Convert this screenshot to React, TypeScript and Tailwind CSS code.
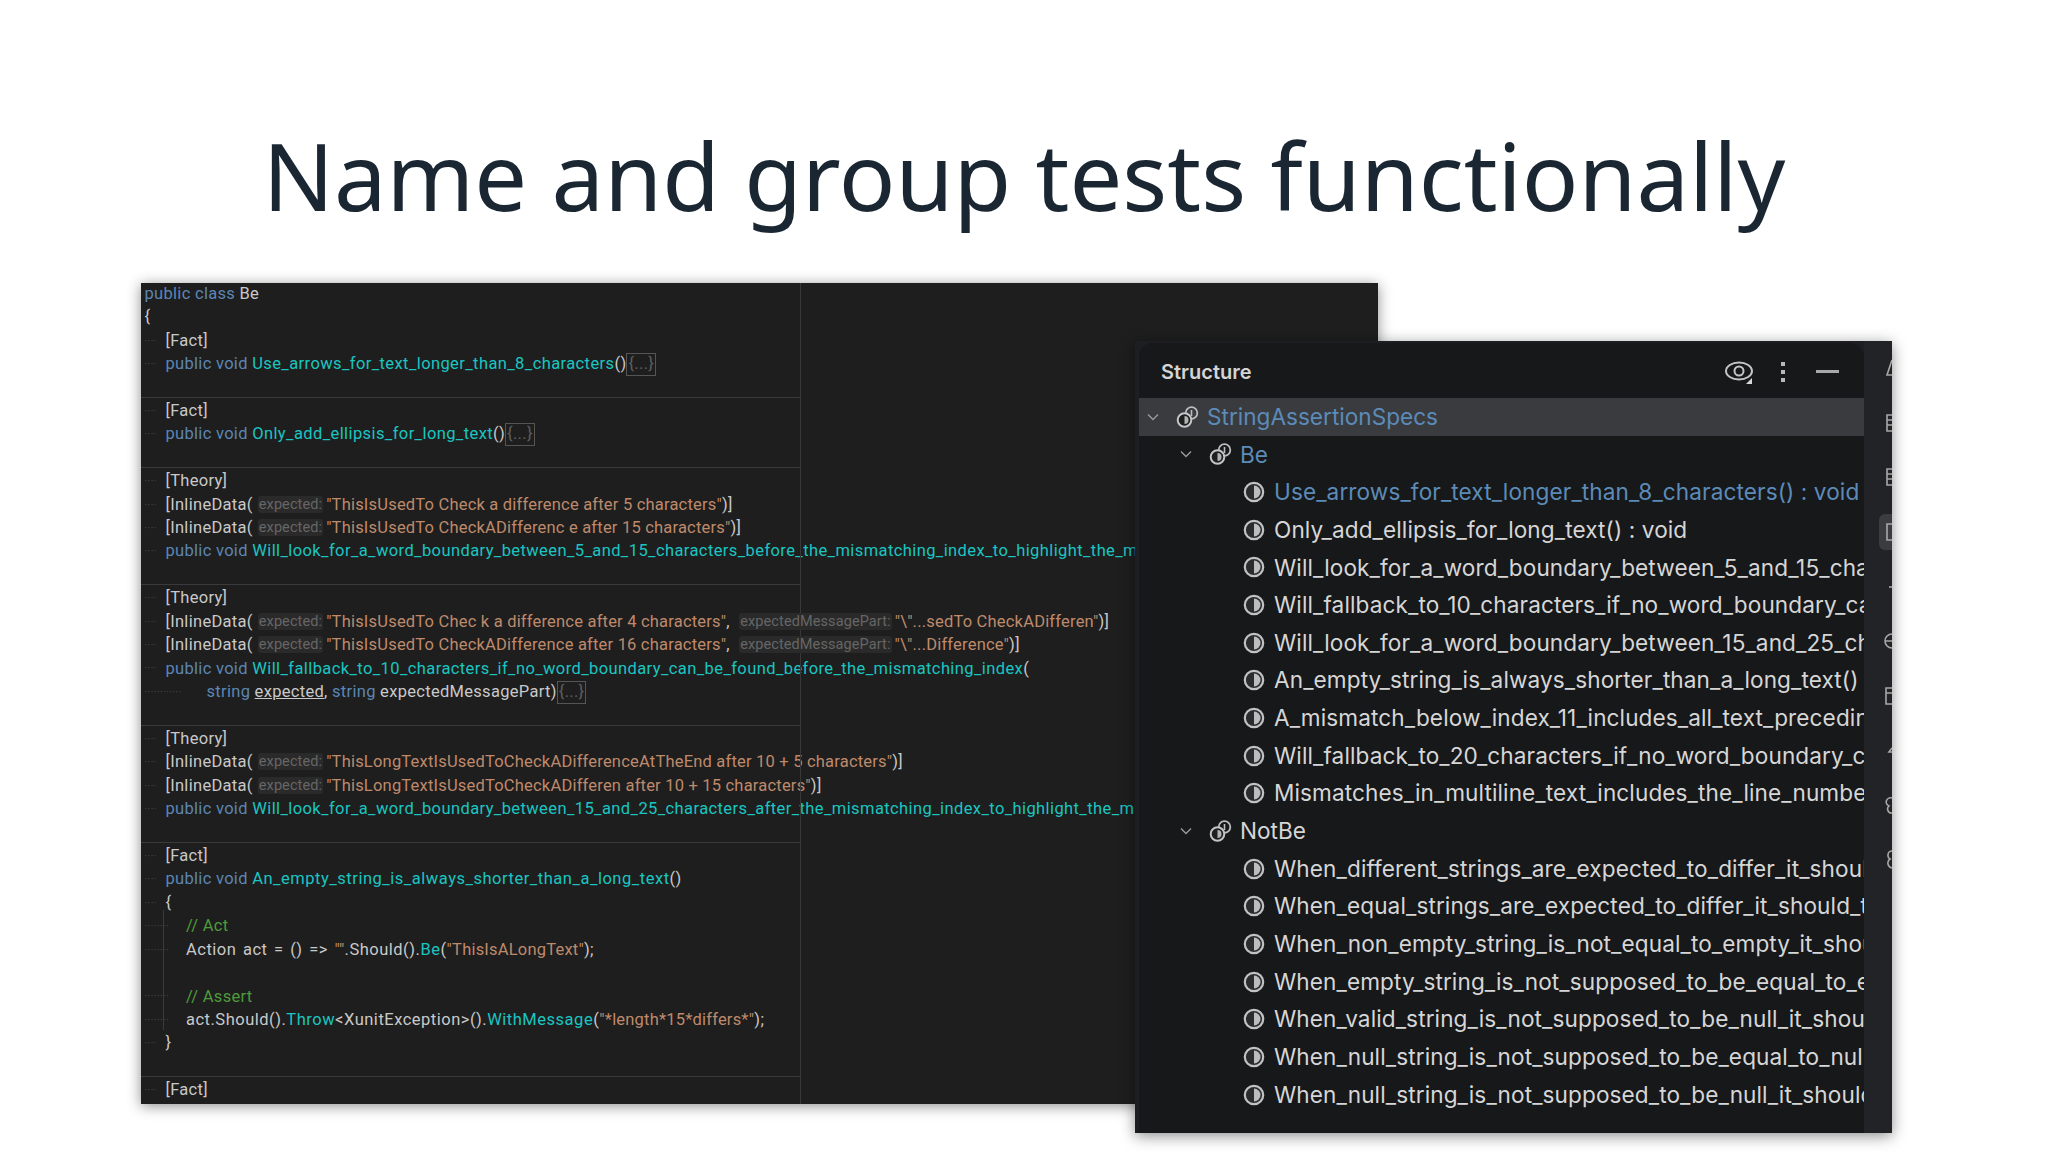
const KW = "text-[#5c86b4]";
const FN = "text-[#1ac5c2] tracking-[0.4px]";
const TX = "text-[#c9c9c9]";
const ST = "text-[#bf8a6c] tracking-[0.2px]";
const CM = "text-[#4f9a3c]";

function K({ children }: { children: React.ReactNode }) { return <span className={KW}>{children}</span>; }
function F({ children, wide }: { children: React.ReactNode; wide?: boolean }) { return <span className={wide ? "text-[#1ac5c2] tracking-[0.52px]" : FN}>{children}</span>; }
function S({ children }: { children: React.ReactNode }) { return <span className={ST}>{children}</span>; }
function Hint({ children }: { children: React.ReactNode }) {
  return <span className="relative -top-[1px] ml-[5px] mr-[3px] rounded-[3px] bg-[#2a2a2a] px-[1px] text-[14.5px] tracking-[0.1px] text-[#666666]">{children}</span>;
}
function Fold() {
  return <span className="inline-block h-[23px] border border-[#555555] px-[1px] leading-[20px] text-[#5f5f5f]">{"{...}"}</span>;
}
function Line({ n = 0, loose, children }: { n?: number; loose?: boolean; children?: React.ReactNode }) {
  const pad = ["w-0", "w-[21px]", "w-[41.5px]", "w-[62px]"][n];
  const dots = ["", "····", "········", "············"][n];
  return (
    <div className="flex h-[23.43px] items-center whitespace-nowrap pl-[3.5px]">
      <span className={`${pad} shrink-0 text-[10px] tracking-[0.5px] text-[#4a4a4a]`}>{dots}</span>
      <span className={loose ? `${TX} tracking-[0.5px] [word-spacing:2px]` : TX}>{children}</span>
    </div>
  );
}
function Sep() {
  return (
    <div className="flex h-[23.43px] items-end pb-[2px]">
      <div className="h-px w-[659px] bg-[#3a3a3a]" />
    </div>
  );
}
function Inline({ children }: { children: React.ReactNode }) {
  return <Line n={1}>[InlineData(<Hint>expected:</Hint>{children}</Line>;
}

function Editor() {
  return (
    <div className="relative ml-[141px] h-[821px] w-[1237px] overflow-hidden bg-[#1e1e1e] font-['Roboto',sans-serif] text-[16.5px] tracking-[0.3px] shadow-[0_2px_13px_rgba(0,0,0,0.45)]">
      <div className="absolute left-[659px] top-0 h-full w-px bg-[#383838]" />
      <div className="absolute left-[21.5px] top-[627px] h-[120px] w-px bg-[#3a3a3a]" />
      <div className="-mt-[0.5px]">
        <Line><K>public class</K> Be</Line>
        <Line>{"{"}</Line>
        <Line n={1}>[Fact]</Line>
        <Line n={1}><K>public void</K> <F>Use_arrows_for_text_longer_than_8_characters</F>()<Fold /></Line>
        <Sep />
        <Line n={1}>[Fact]</Line>
        <Line n={1}><K>public void</K> <F>Only_add_ellipsis_for_long_text</F>()<Fold /></Line>
        <Sep />
        <Line n={1}>[Theory]</Line>
        <Inline><S>"ThisIsUsedTo Check a difference after 5 characters"</S>)]</Inline>
        <Inline><S>"ThisIsUsedTo CheckADifferenc e after 15 characters"</S>)]</Inline>
        <Line n={1}><K>public void</K> <F>Will_look_for_a_word_boundary_between_5_and_15_characters_before_the_mismatching_index_to_highlight_the_mismatch</F></Line>
        <Sep />
        <Line n={1}>[Theory]</Line>
        <Inline><S>"ThisIsUsedTo Chec k a difference after 4 characters"</S>, <Hint>expectedMessagePart:</Hint><S>"\"...sedTo CheckADifferen"</S>)]</Inline>
        <Inline><S>"ThisIsUsedTo CheckADifference after 16 characters"</S>, <Hint>expectedMessagePart:</Hint><S>"\"...Difference"</S>)]</Inline>
        <Line n={1}><K>public void</K> <F>Will_fallback_to_10_characters_if_no_word_boundary_can_be_found_before_the_mismatching_index</F>(</Line>
        <Line n={3}><K>string</K> <span className="underline">expected</span>, <K>string</K> expectedMessagePart)<Fold /></Line>
        <Sep />
        <Line n={1}>[Theory]</Line>
        <Inline><S>"ThisLongTextIsUsedToCheckADifferenceAtTheEnd after 10 + 5 characters"</S>)]</Inline>
        <Inline><S>"ThisLongTextIsUsedToCheckADifferen after 10 + 15 characters"</S>)]</Inline>
        <Line n={1}><K>public void</K> <F>Will_look_for_a_word_boundary_between_15_and_25_characters_after_the_mismatching_index_to_highlight_the_mismatch</F></Line>
        <Sep />
        <Line n={1}>[Fact]</Line>
        <Line n={1}><K>public void</K> <F wide>An_empty_string_is_always_shorter_than_a_long_text</F>()</Line>
        <Line n={1}>{"{"}</Line>
        <Line n={2}><span className={CM}>// Act</span></Line>
        <Line n={2} loose>Action act = () =&gt; <S>""</S>.Should().<F wide>Be</F>(<S>"ThisIsALongText"</S>);</Line>
        <Line />
        <Line n={2}><span className={CM}>// Assert</span></Line>
        <Line n={2} loose>act.Should().<F wide>Throw</F>&lt;XunitException&gt;().<F wide>WithMessage</F>(<S>"*length*15*differs*"</S>);</Line>
        <Line n={1}>{"}"}</Line>
        <Sep />
        <Line n={1}>[Fact]</Line>
      </div>
    </div>
  );
}

function MethodIcon() {
  return (
    <svg width="22" height="22" viewBox="0 0 22 22" className="shrink-0">
      <circle cx="11" cy="11" r="9.2" fill="#2b2c2e" stroke="#c2c2c2" strokeWidth="2.2" />
      <path d="M11 4.5a6.5 6.5 0 0 1 0 13z" fill="#bdbdbd" />
    </svg>
  );
}
function ClassIcon() {
  return (
    <svg width="24" height="24" viewBox="0 0 24 24" className="shrink-0">
      <circle cx="15.5" cy="8" r="5.8" fill="none" stroke="#bdbdbd" strokeWidth="1.8" />
      <path d="M15.5 5v6" stroke="#bdbdbd" strokeWidth="1.6" />
      <circle cx="8.5" cy="15" r="6.8" fill="#1e1f21" stroke="#c4c4c4" strokeWidth="2" />
      <path d="M8.5 11v8a4 4 0 0 0 0-8z" fill="#b4b4b4" />
    </svg>
  );
}
function Chevron() {
  return (
    <svg width="14" height="14" viewBox="0 0 14 14" className="shrink-0" fill="none" stroke="#9a9a9a" strokeWidth="1.4">
      <path d="M2 4.5 7 9.5 12 4.5" />
    </svg>
  );
}

const beRows = [
  "Use_arrows_for_text_longer_than_8_characters() : void",
  "Only_add_ellipsis_for_long_text() : void",
  "Will_look_for_a_word_boundary_between_5_and_15_characters_before_the_mismatching_index",
  "Will_fallback_to_10_characters_if_no_word_boundary_can_be_found_before_the_mismatching",
  "Will_look_for_a_word_boundary_between_15_and_25_characters_after_the_mismatching_index",
  "An_empty_string_is_always_shorter_than_a_long_text()",
  "A_mismatch_below_index_11_includes_all_text_preceding_the_mismatch",
  "Will_fallback_to_20_characters_if_no_word_boundary_can_be_found",
  "Mismatches_in_multiline_text_includes_the_line_number",
];
const notBeRows = [
  "When_different_strings_are_expected_to_differ_it_should_not_throw",
  "When_equal_strings_are_expected_to_differ_it_should_throw",
  "When_non_empty_string_is_not_equal_to_empty_it_should_not_throw",
  "When_empty_string_is_not_supposed_to_be_equal_to_empty_it_should_throw",
  "When_valid_string_is_not_supposed_to_be_null_it_should_not_throw",
  "When_null_string_is_not_supposed_to_be_equal_to_null_it_should_throw",
  "When_null_string_is_not_supposed_to_be_null_it_should_throw",
];

function Method({ label, active }: { label: string; active?: boolean }) {
  return (
    <div className="flex h-[37.67px] items-center gap-[9px] overflow-hidden whitespace-nowrap pl-[104px] tracking-[0.1px]">
      <MethodIcon />
      <span className={active ? "text-[#5c8bb8]" : "text-[#d6d6d6]"}>{label}</span>
    </div>
  );
}

const stripIcons: string[] = [
  "M8 3 3 18h5M3 18",
  "M8 3H3v16h5M3 8h5M3 13h5",
  "M8 3H3v16h5M3 8h5M3 13h5",
  "M8 3H3v16h5",
  "M8 11H5",
  "M8 4a7 7 0 0 0 0 14M1 11h7",
  "M8 3H2v16h6M2 8h6",
  "M8 9l-3 4h3",
  "M8 4a4 4 0 0 0-3 8 4 4 0 0 0 3 7",
  "M8 2a4 4 0 0 0-4 4 4 4 0 0 0 2 4 5 5 0 0 0 2 9",
];

function Strip() {
  return (
    <div className="flex w-[28px] shrink-0 flex-col items-end bg-[#222327]">
      {stripIcons.map((d, i) => (
        <div key={i} className="flex h-[54.6px] w-full shrink-0 items-center justify-end">
          <div className={i === 3 ? "flex h-[36px] w-[13px] items-center justify-end rounded-l-[6px] bg-[#3a3c40]" : "flex items-center"}>
            <svg width="8" height="22" viewBox="0 0 8 22" fill="none" stroke="#a8a8a8" strokeWidth="1.6" className="shrink-0">
              <path d={d} />
            </svg>
          </div>
        </div>
      ))}
    </div>
  );
}

function Structure() {
  return (
    <div className="absolute left-[1135px] top-[58px] flex h-[792px] w-[757px] overflow-hidden bg-[#1d1e21] pl-[4px] font-['Inter',sans-serif] text-[22.6px] shadow-[0_3px_14px_rgba(0,0,0,0.45)]">
      <div className="mt-[2px] min-w-0 flex-1 overflow-hidden rounded-t-[14px] bg-[#17181a]">
        <div className="flex h-[55px] items-center justify-between pl-[22px] pr-[25px] pt-[2px]">
          <span className="text-[20px] font-semibold text-[#d4d4d4]">Structure</span>
          <div className="flex items-center">
            <svg width="32" height="28" viewBox="0 0 32 28" fill="none">
              <ellipse cx="14" cy="13" rx="13" ry="8.5" stroke="#c4c4c4" strokeWidth="2" />
              <circle cx="14" cy="13" r="4.5" stroke="#c4c4c4" strokeWidth="2" />
              <path d="M27 20v6h-6z" fill="#d8d8d8" />
            </svg>
            <svg width="6" height="24" viewBox="0 0 6 24" fill="#b8b8b8" className="ml-[23px]">
              <rect x="1" y="2" width="4" height="4" />
              <rect x="1" y="10" width="4" height="4" />
              <rect x="1" y="18" width="4" height="4" />
            </svg>
            <div className="ml-[30px] h-[3px] w-[23px] bg-[#a9a9a9]" />
          </div>
        </div>
        <div className="flex h-[37.67px] items-center gap-[7px] whitespace-nowrap bg-[#393b3f] pl-[7px] text-[#5c8bb8]">
          <Chevron />
          <span className="ml-[9px] flex"><ClassIcon /></span>
          <span>StringAssertionSpecs</span>
        </div>
        <div className="flex h-[37.67px] items-center gap-[7px] whitespace-nowrap pl-[40px] text-[#5c8bb8]">
          <Chevron />
          <span className="ml-[9px] flex"><ClassIcon /></span>
          <span>Be</span>
        </div>
        {beRows.map((r, i) => <Method key={r} label={r} active={i === 0} />)}
        <div className="flex h-[37.67px] items-center gap-[7px] whitespace-nowrap pl-[40px] text-[#d6d6d6]">
          <Chevron />
          <span className="ml-[9px] flex"><ClassIcon /></span>
          <span>NotBe</span>
        </div>
        {notBeRows.map((r) => <Method key={r} label={r} />)}
      </div>
      <Strip />
    </div>
  );
}

export default function App() {
  return (
    <div className="h-[1152px] w-[2048px] overflow-hidden bg-white">
      <h1 className="h-[283px] pt-[117px] text-center font-['Noto_Sans',sans-serif] text-[93.8px] font-normal leading-[116px] text-[#1a2733]">
        Name and group tests functionally
      </h1>
      <div className="relative">
        <Editor />
        <Structure />
      </div>
    </div>
  );
}
